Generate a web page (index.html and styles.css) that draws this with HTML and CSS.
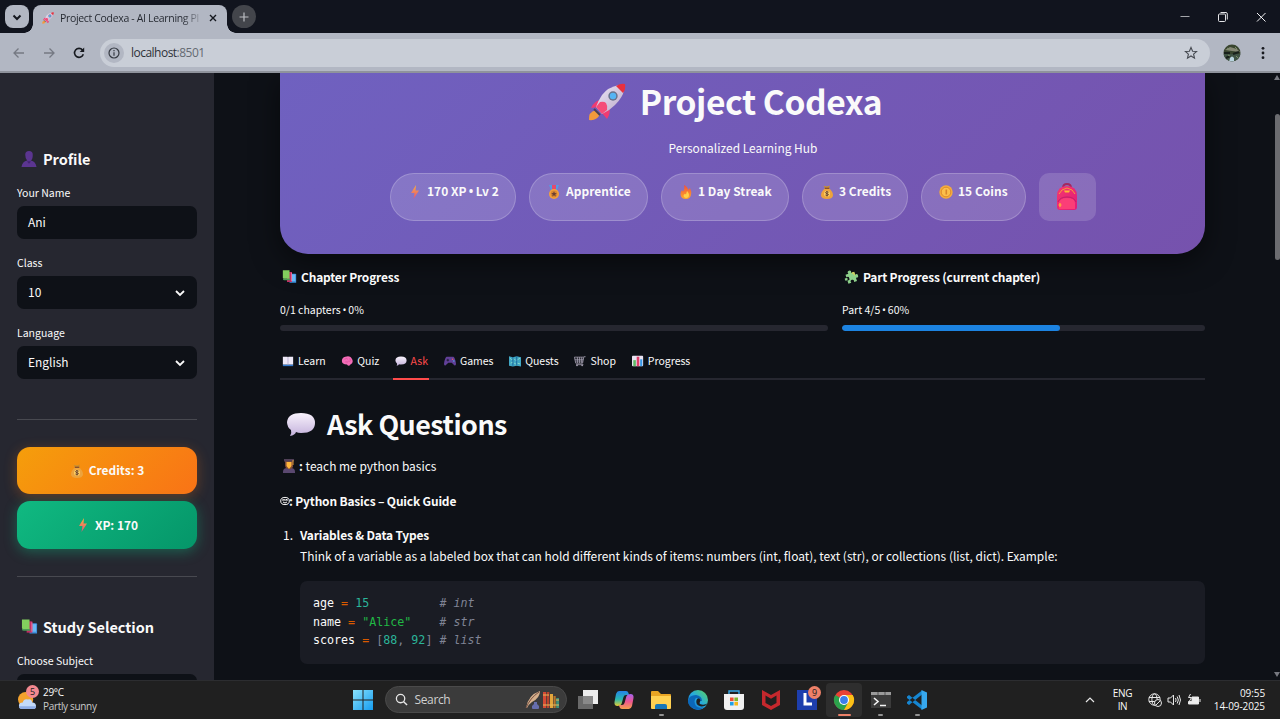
FILE: index.html
```html
<!DOCTYPE html>
<html lang="en">
<head>
<meta charset="utf-8">
<title>Project Codexa - AI Learning Platform</title>
<link rel="stylesheet" href="styles.css">
</head>
<body>
<svg class="defs" width="0" height="0" aria-hidden="true">
  <defs>
    <linearGradient id="g-bolt" x1="0" y1="0" x2="0" y2="1"><stop offset="0" stop-color="#ffb13b"/><stop offset="1" stop-color="#e0507c"/></linearGradient>
    <linearGradient id="g-fire" x1="0" y1="0" x2="0" y2="1"><stop offset="0" stop-color="#f0503c"/><stop offset="1" stop-color="#ffa82b"/></linearGradient>
    <linearGradient id="g-bag" x1="0" y1="0" x2="1" y2="1"><stop offset="0" stop-color="#f5386e"/><stop offset="1" stop-color="#e0197a"/></linearGradient>
    <linearGradient id="g-bubble" x1="0" y1="0" x2="0" y2="1"><stop offset="0" stop-color="#f8f2fc"/><stop offset="1" stop-color="#c4b2dc"/></linearGradient>
    <linearGradient id="g-body" x1="0" y1="0" x2="1" y2="1"><stop offset="0" stop-color="#eee6f6"/><stop offset="1" stop-color="#b9a9c8"/></linearGradient>
    <linearGradient id="g-win" x1="0" y1="0" x2="1" y2="1"><stop offset="0" stop-color="#8ae2fc"/><stop offset="1" stop-color="#159cf0"/></linearGradient>
    <linearGradient id="g-edge" x1="0" y1="1" x2="1" y2="0"><stop offset="0" stop-color="#0b63c4"/><stop offset=".5" stop-color="#25a9e0"/><stop offset="1" stop-color="#5bd65b"/></linearGradient>
    <linearGradient id="g-cop1" x1="0" y1="0" x2="0" y2="1"><stop offset="0" stop-color="#2583e8"/><stop offset=".55" stop-color="#29b8b0"/><stop offset="1" stop-color="#e5cc32"/></linearGradient>
    <linearGradient id="g-cop2" x1="0" y1="0" x2="0" y2="1"><stop offset="0" stop-color="#a463ee"/><stop offset=".5" stop-color="#ee5690"/><stop offset="1" stop-color="#f6a04c"/></linearGradient>
    <symbol id="rocket" viewBox="0 0 38 38">
      <path d="M8 27 Q0 29 1 37 Q9 38 12 31Z" fill="#f39a3c"/>
      <path d="M13 17 Q7 17 3 25 L10 24Z M21 25 Q23 30 19 36 L14 30Z" fill="#ef3b72"/>
      <path d="M31 2 Q20 4 14 12 Q10 18 8 24 L14 31 Q21 28 27 22 Q35 14 36 7Z" fill="url(#g-body)"/>
      <path d="M28 3 Q33 0 37 1 Q38 6 35 10Z" fill="#e8303e"/>
      <path d="M12 19 Q16 18 18 20 Q20 23 19 27 L14 31 L8 24Z" fill="#f54c78"/>
      <path d="M6 26 L12 32" stroke="#4a4058" stroke-width="2"/>
      <circle cx="25" cy="13" r="4.700" fill="#68718c"/><circle cx="25" cy="13" r="3.200" fill="#55b4f4"/>
    </symbol>
    <symbol id="bolt" viewBox="0 0 14 14"><path d="M8 0 L3 8 H6.500 L5.500 14 L11 5.500 H7.500Z" fill="url(#g-bolt)"/></symbol>
    <symbol id="medal" viewBox="0 0 14 14"><path d="M2 0h3l3 6-3 1z" fill="#4f9ce8"/><path d="M12 0H9L6 6l3 1z" fill="#4f9ce8"/><path d="M5 0h4v6H5z" fill="#e24b71"/><circle cx="7" cy="9" r="5" fill="#f5a13a"/><circle cx="7" cy="9" r="3.400" fill="#d98832"/><path d="M7 6.300l.8 1.800 2 .1-1.500 1.200.5 2L7 10.300l-1.800 1.100.5-2-1.500-1.200 2-.1z" fill="#6b3f32"/></symbol>
    <symbol id="fire" viewBox="0 0 14 14"><path d="M5 0 Q9 2 9 5 L11 3 Q13 7 12 10 Q11 14 7 14 Q2 14 1.500 9.500 Q1.300 7 3 5 L4 6.500 Q6 4 5 0Z" fill="url(#g-fire)"/><path d="M8 6 Q11 9 9.500 12 Q7 14 5 12 Q3.800 10 6 8.800 L7 9.500Z" fill="#ffd04a"/></symbol>
    <symbol id="money" viewBox="0 0 14 14"><path d="M5 3 L3.500.8 L7 1.500 L10 .5 L9 3Z" fill="#c98f2f"/><path d="M5 3H9Q13 7 13 10Q13 14 7 14Q1 14 1 10Q1 7 5 3Z" fill="#eda33c"/><path d="M4.800 3.300h4.500" stroke="#80482c" stroke-width="1.200"/><circle cx="7" cy="8.700" r="3" fill="#ffcf62"/><path d="M8.600 7.200Q5.500 6 5.500 7.600Q5.700 8.500 7 8.700Q8.800 9 8.300 10Q7.300 11 5.400 10M7 6v5.500" fill="none" stroke="#63402c" stroke-width=".9"/></symbol>
    <symbol id="coin" viewBox="0 0 14 14"><circle cx="7" cy="7" r="6.700" fill="#f6ad3c"/><circle cx="7" cy="7" r="4.800" fill="#fcbf4b" stroke="#d9872b" stroke-width=".9"/><path d="M6.500 4.500h1.600v5H6.500z" fill="#d9872b"/></symbol>
    <symbol id="bag" viewBox="0 0 24 28"><path d="M8 5Q8 1 12 1Q16 1 16 5" fill="none" stroke="#a5275e" stroke-width="2"/><path d="M2 13Q2 3 12 3Q22 3 22 13V24Q22 27 19 27H5Q2 27 2 24Z" fill="url(#g-bag)"/><path d="M4 11Q6 6 12 5Q18 6 20 11" stroke="#f79a3c" fill="none"/><path d="M9 7.500h6l-1 2h-4z" fill="#ffb636"/><path d="M4 26v-6Q5 15 12 15Q20 15 20 20v6Z" fill="#fb3e77"/><path d="M3 19Q5 14 12 14Q19 14 21 19" stroke="#c21e68" fill="none"/><path d="M5 20v4M3.500 22h3" stroke="#ffb636" stroke-width="1.200"/></symbol>
    <symbol id="books" viewBox="0 0 18 16"><path d="M9 4h7q1 0 1 1v10H9z" fill="#3d91df"/><path d="M10 5h6v8h-6z" fill="#6bb9f4"/><path d="M6 2h6v12H6z" fill="#c22d63"/><path d="M11 3h1v10h-1z" fill="#ea78a0"/><path d="M1 0h8v10H2q-1 0-1-1z" fill="#82cf5e"/><path d="M2 10h8v2H3q-2 0-2-2" fill="#4a9b55"/></symbol>
    <symbol id="puzzle" viewBox="0 0 14 14"><g transform="rotate(-18 7 7)"><path d="M2 3H5Q4 .3 6.500.3Q9 .3 8 3H11V6Q13.700 5 13.700 7.500Q13.700 10 11 9V12.500H8Q9 9.800 6.500 9.800Q4 9.800 5 12.500H2V9Q4.500 10 4.500 7.500Q4.500 5 2 6Z" fill="#8ed18b"/><path d="M8.500 3.500h2v3" stroke="#d0cf5f" stroke-width="1.500" fill="none"/><path d="M0 6.500q2-1 3 1q-1 2-3 1z" fill="#8ed18b"/></g></symbol>
    <symbol id="openbook" viewBox="0 0 14 12"><path d="M1 10h12v2H1z" fill="#3279cf"/><path d="M1 1h5.500L7 2l.5-1H13v9H1z" fill="#eee9f8"/><path d="M7 2v8" stroke="#b6acd0"/></symbol>
    <symbol id="brain" viewBox="0 0 14 12"><path d="M5 1Q11-1 13 4Q15 8 11 10Q9 13 7 10Q1 10 1 6Q1 2 5 1Z" fill="#f36cb7"/><path d="M4 4q3-2 4 0M5 7q3 1 4-1M10 3q2 2 0 4" fill="none" stroke="#d84896" stroke-width=".8"/></symbol>
    <symbol id="bubble" viewBox="0 0 30 26"><path d="M15 2Q29 2 29 12Q29 22 15 22Q12 22 10 21Q9 24 4 25Q6 22 5 19Q1 16 1 11Q2 2 15 2Z" fill="url(#g-bubble)"/></symbol>
    <symbol id="game" viewBox="0 0 14 12"><path d="M3 1h8q2 1 3 8q0 3-2 2L9 8H5l-3 3Q0 12 0 9Q1 2 3 1Z" fill="#614098"/><path d="M3 5h3M4.500 3.500v3" stroke="#1b1830"/><circle cx="10" cy="4" r=".8" fill="#f4565d"/><circle cx="11.500" cy="6" r=".8" fill="#4eb9ef"/></symbol>
    <symbol id="map" viewBox="0 0 14 13"><path d="M0 1l4.500 1L9 1l5 1v11l-5-1-4.500 1L0 12z" fill="#40a6c4"/><path d="M4.500 2v10M9 1v10" stroke="#165d94"/><path d="M1 3l2 2 1-1M6 4l2 2M10 5l3-2M2 9l2-1M6 9l2 1M10 9l3 1" fill="none" stroke="#8fdfca"/></symbol>
    <symbol id="cart" viewBox="0 0 14 12"><path d="M13.500 1h-2L10 8.500H2L.5 1.500H11M1 4h10M1.500 6h9M4 1.500v7M6.500 1.500v7M9 1.500v7M2.500 10.300H11" fill="none" stroke="#aaa5b7" stroke-width=".9"/><circle cx="3.500" cy="11" r="1" fill="#aaa5b7"/><circle cx="9.500" cy="11" r="1" fill="#aaa5b7"/></symbol>
    <symbol id="chart" viewBox="0 0 14 12"><rect x="0" y="0" width="13" height="12" rx="1" fill="#e9e2f1"/><path d="M1.500 5h3v7h-3z" fill="#5cba64"/><path d="M5.500 1h3v11h-3z" fill="#e03e69"/><path d="M9.500 4h2.500v8H9.500z" fill="#3699e8"/></symbol>
    <symbol id="person" viewBox="0 0 16 17"><path d="M4 4Q4 0 8 0Q12 0 12 4Q12 9 10 10Q15 11 16 17H0Q1 11 6 10Q4 8 4 4Z" fill="#5b3590"/><path d="M6 10Q8 12 10 10L9 13H7z" fill="#442373"/></symbol>
    <symbol id="student" viewBox="0 0 12 14"><path d="M0 13Q0 9 4 9H8Q12 9 12 13V14H0Z" fill="#5a4870"/><path d="M2 2h8v6Q8 11 6 10Q2 10 2 6z" fill="#7d4a37"/><path d="M3.500 3h5v4l-2.500 3-2.500-3z" fill="#ffb63b"/><path d="M1 0h10v2.500H1z" fill="#504057"/><path d="M10 1v5" stroke="#dd993b"/></symbol>
  </defs>
</svg>

<header class="browser">
  <div class="tabstrip">
    <button class="tab-search"><svg viewBox="0 0 24 24"><path d="M8.500 10.500l3.500 3.500 3.500-3.500" fill="none" stroke="#14171f" stroke-width="2"/></svg></button>
    <div class="tab">
      <svg class="tab-icon"><use href="#rocket"/></svg>
      <span class="tab-title">Project Codexa - AI Learning Pl</span>
      <svg class="tab-close" viewBox="0 0 8 8"><path d="M1 1l6 6M7 1L1 7" stroke="#15181f" stroke-width="1.400"/></svg>
    </div>
    <button class="new-tab"><svg viewBox="0 0 24 24"><path d="M12 7.500v9M7.500 12h9" stroke="#bdbfc4" stroke-width="1.200"/></svg></button>
    <div class="window-controls">
      <svg viewBox="0 0 12 12"><path d="M1.500 5.500h9" stroke="#a4a6ab"/></svg>
      <svg viewBox="0 0 12 12"><rect x="1.500" y="3" width="7" height="7.500" rx="1" fill="none" stroke="#e5e5e8"/><path d="M3.500 1.500H9Q10.300 1.500 10.300 3V8.500" fill="none" stroke="#e5e5e8"/></svg>
      <svg viewBox="0 0 12 12"><path d="M2 2l8.500 8.500M10.500 2L2 10.500" stroke="#f5f5f7"/></svg>
    </div>
  </div>
  <div class="toolbar">
    <svg class="nav" viewBox="0 0 14 14"><path d="M12 7H2M6.500 2.500L2 7l4.500 4.500" fill="none" stroke="#757983" stroke-width="1.300"/></svg>
    <svg class="nav" viewBox="0 0 14 14"><path d="M2 7h10M7.500 2.500L12 7l-4.500 4.500" fill="none" stroke="#757983" stroke-width="1.300"/></svg>
    <svg class="nav" viewBox="0 0 14 14"><path d="M11.300 8.300A4.500 4.500 0 1 1 10.500 4L11.500 5.200" fill="none" stroke="#16191f" stroke-width="1.600"/><path d="M12.200 1.500V6H7.700z" fill="#16191f"/></svg>
    <div class="omnibox">
      <span class="site-info"><svg viewBox="0 0 12 12"><circle cx="6" cy="6" r="5" fill="none" stroke="#343941" stroke-width="1.200"/><path d="M6 5.200v3.500M6 3v1.200" stroke="#343941" stroke-width="1.200"/></svg></span>
      <span class="url">localhost<span class="port">:8501</span></span>
      <svg class="star" viewBox="0 0 14 14"><path d="M7 1.500l1.600 3.700 4 .3-3 2.700.9 3.900L7 10l-3.500 2.100.9-3.900-3-2.700 4-.3z" fill="none" stroke="#454950" stroke-width="1.100"/></svg>
    </div>
    <svg class="avatar" viewBox="0 0 18 18"><clipPath id="av"><circle cx="9" cy="9" r="8.500"/></clipPath><g clip-path="url(#av)"><path d="M0 0h18v18H0z" fill="#39452f"/><path d="M0 10h18v8H0z" fill="#405345"/><path d="M2 6l5-3 7 2 3 3-8-1z" fill="#858775"/><path d="M1 9h6M10 10l6-2M3 14l4-2" stroke="#18201b" stroke-width="2"/><path d="M4 4l3 2M12 3l2 2M13 12l2 2M5 11l2 1" stroke="#7c906b"/><path d="M7 14q2-3 4 0v4H6z" fill="#b9d4df"/></g></svg>
    <svg class="kebab" viewBox="0 0 4 14"><circle cx="2" cy="2.300" r="1.400"/><circle cx="2" cy="7" r="1.400"/><circle cx="2" cy="11.700" r="1.400"/></svg>
  </div>
</header>

<div class="viewport">
  <aside class="sidebar">
    <h3 class="side-heading"><svg class="emoji-side"><use href="#person"/></svg><span>Profile</span></h3>
    <label class="field"><span class="label">Your Name</span><span class="input">Ani</span></label>
    <label class="field"><span class="label">Class</span><span class="input">10<svg class="chev" viewBox="0 0 10 7"><path d="M1 1l4 4 4-4"/></svg></span></label>
    <label class="field"><span class="label">Language</span><span class="input">English<svg class="chev" viewBox="0 0 10 7"><path d="M1 1l4 4 4-4"/></svg></span></label>
    <div class="rule rule-top"></div>
    <div class="stat credits"><svg><use href="#money"/></svg>Credits: 3</div>
    <div class="stat xp"><svg><use href="#bolt"/></svg>XP: 170</div>
    <div class="rule rule-bottom"></div>
    <h3 class="side-heading study"><svg class="emoji-side emoji-books"><use href="#books"/></svg><span>Study Selection</span></h3>
    <label class="field"><span class="label">Choose Subject</span><span class="input"></span></label>
  </aside>

  <main class="main">
    <section class="hero">
      <h1 class="hero-title"><svg><use href="#rocket"/></svg><span>Project Codexa</span></h1>
      <p class="hero-sub">Personalized Learning Hub</p>
      <div class="pills">
        <div class="pill p-xp"><svg><use href="#bolt"/></svg><span>170 XP <span class="bullet">•</span> Lv 2</span></div>
        <div class="pill p-rank"><svg><use href="#medal"/></svg>Apprentice</div>
        <div class="pill p-streak"><svg><use href="#fire"/></svg>1 Day Streak</div>
        <div class="pill p-credits"><svg><use href="#money"/></svg>3 Credits</div>
        <div class="pill p-coins"><svg><use href="#coin"/></svg>15 Coins</div>
        <div class="bag"><svg><use href="#bag"/></svg></div>
      </div>
    </section>

    <section class="progress-row">
      <div><h4 class="prog-title"><svg><use href="#books"/></svg>Chapter Progress</h4><p class="prog-label">0/1 chapters <span class="bullet">•</span> 0%</p><div class="bar"></div></div>
      <div><h4 class="prog-title"><svg><use href="#puzzle"/></svg>Part Progress (current chapter)</h4><p class="prog-label">Part 4/5 <span class="bullet">•</span> 60%</p><div class="bar"><div class="fill" style="width:60%"></div></div></div>
    </section>

    <nav class="tabs">
      <a class="t-learn"><svg><use href="#openbook"/></svg>Learn</a>
      <a class="t-quiz"><svg><use href="#brain"/></svg>Quiz</a>
      <a class="t-ask active"><svg><use href="#bubble"/></svg>Ask</a>
      <a class="t-games"><svg><use href="#game"/></svg>Games</a>
      <a class="t-quests"><svg><use href="#map"/></svg>Quests</a>
      <a class="t-shop"><svg><use href="#cart"/></svg>Shop</a>
      <a class="t-progress"><svg><use href="#chart"/></svg>Progress</a>
    </nav>

    <h2 class="ask-title"><svg><use href="#bubble"/></svg><span>Ask Questions</span></h2>
    <p class="line user"><svg><use href="#student"/></svg><b>:</b>&nbsp;<span>teach me python basics</span></p>
    <p class="line bot"><svg viewBox="0 0 12 10"><ellipse cx="5" cy="5" rx="4.300" ry="3.600"/><path d="M2 4h6M3 6q2 2 4 0M4 3v1M6.500 3v1"/></svg><b>: Python Basics – Quick Guide</b></p>
    <div class="item"><span class="num">1.</span><div><p class="item-title">Variables &amp; Data Types</p><p class="item-text">Think of a variable as a labeled box that can hold different kinds of items: numbers (int, float), text (str), or collections (list, dict). Example:</p></div></div>
    <pre class="code">age <i class="op">=</i> <i class="n">15</i>          <i class="c"># int</i>
name <i class="op">=</i> <i class="s">"Alice"</i>    <i class="c"># str</i>
scores <i class="op">=</i> <i class="p">[</i><i class="n">88</i><i class="p">,</i> <i class="n">92</i><i class="p">]</i> <i class="c"># list</i></pre>
  </main>
  <div class="scrollbar"><i class="up"></i><i class="thumb"></i><i class="down"></i></div>
</div>

<footer class="taskbar">
  <div class="weather">
    <div class="weather-icon"><svg viewBox="0 0 20 20"><circle cx="8" cy="9" r="8" fill="#f3a22d"/><path d="M5 19Q1 19 1 15.500Q1 12 5 12Q6 8 10.500 9Q14 8 15 12Q19 12 19 16Q19 19 15 19Z" fill="#c3dafa"/><path d="M5 19Q1 19 1 16h18q0 3-4 3z" fill="#8faee7"/></svg><span class="badge">5</span></div>
    <div class="weather-text"><span class="temp">29°C</span><span class="cond">Partly sunny</span></div>
  </div>
  <div class="apps">
    <div class="app"><svg viewBox="0 0 22 22"><path d="M1 1h9.500v9.500H1zM11.500 1H21v9.500h-9.500zM1 11.500h9.500V21H1zM11.500 11.500H21V21h-9.500z" fill="url(#g-win)"/></svg></div>
    <div class="search">
      <svg class="lens" viewBox="0 0 14 14"><circle cx="6" cy="6" r="4.500" fill="none" stroke="#e8e8e8" stroke-width="1.400"/><path d="M9.300 9.300L13 13" stroke="#e8e8e8" stroke-width="1.500"/></svg>
      <span>Search</span>
      <svg class="doodle" viewBox="0 0 34 20"><path d="M1 18Q3 5 15 1Q15 8 7 12Q4 14 2 18" fill="#d6b08b"/><path d="M1 18Q5 8 14 2" stroke="#765044" fill="none"/><path d="M9 12h3v2l2 2v2q0 1-1 1H8q-1 0-1-1v-2l2-2z" fill="#666eac"/><path d="M18 2h3v16h-3z" fill="#d54a34"/><path d="M21.700 2h2.600v16h-2.600z" fill="#b8442d"/><path d="M25 4h3v14h-3z" fill="#e3a63c"/><path d="M28.500 6h2.200v12h-2.200z" fill="#b7752c"/><path d="M31.200 8h2.800v10h-2.800z" fill="#3e8e79"/><path d="M18 5h6M18 15h16M31 10h3" stroke="#e9bb5b"/></svg>
    </div>
    <div class="app"><svg viewBox="0 0 22 22"><path d="M6 1h15v14H6z" fill="#ededed"/><path d="M1 7h15v13H1z" fill="#777" opacity=".85"/></svg></div>
    <div class="app"><svg viewBox="0 0 22 22"><path d="M6 2h7q2 0 2.500 2L16 6h-3q-2 0-2.500 2L8.500 15q-1 2-4 2Q1 17 1.500 13L3 5q1-3 3-3z" fill="url(#g-cop1)"/><path d="M16 20H9q-2 0-2.500-2L6 16h3q2 0 2.500-2L13.500 7q1-2 4-2Q21 5 20.500 9L19 17q-1 3-3 3z" fill="url(#g-cop2)"/></svg></div>
    <div class="app"><svg viewBox="0 0 22 22"><path d="M1 3q0-1 1-1h6l3 3h9q1 0 1 1v13H1z" fill="#e9a524"/><path d="M1 7h20v12q0 1-1 1H2q-1 0-1-1z" fill="#ffd152"/><path d="M5 20v-3q0-2 2-2h8q2 0 2 2v3z" fill="#1777b8"/></svg><i class="dot"></i></div>
    <div class="app"><svg viewBox="0 0 22 22"><circle cx="11" cy="11" r="10" fill="url(#g-edge)"/><path d="M1 12Q2 6 9 6Q15 7 15 12H11Q12 9 9 9Q6 12 9 17Q12 20 17 18Q12 23 6 19Q1 17 1 12Z" fill="#0b67b8"/><path d="M12 9.500q2 1 1 3.500q-1 1 0 2q4 2 8-1-3 4-7 3.500Q8 16 9.500 11q.5-2 2.500-1.500z" fill="#202020"/></svg></div>
    <div class="app"><svg viewBox="0 0 22 22"><path d="M6 6V2h10v4" fill="none" stroke="#35a6e5" stroke-width="1.400"/><path d="M1 5h20v13q0 3-3 3H4q-3 0-3-3z" fill="#f1f1f1"/><path d="M7 8.500h3.600v3.600H7z" fill="#ef5033"/><path d="M11.400 8.500H15v3.600h-3.600z" fill="#7cb82f"/><path d="M7 12.900h3.600v3.600H7z" fill="#20a1e6"/><path d="M11.400 12.900H15v3.600h-3.600z" fill="#f7b719"/></svg></div>
    <div class="app"><svg viewBox="0 0 22 22"><path d="M2 1l9 5 9-5v15l-9 5-9-5zM5.500 6.500v7.500l5.500 3 5.500-3V6.500L11 9.800z" fill="#c5282d" fill-rule="evenodd"/></svg></div>
    <div class="app"><svg viewBox="0 0 22 22"><path d="M1 1h20v20H1z" fill="#1d3ead"/><path d="M9 4v11h7" fill="none" stroke="#fff" stroke-width="3"/></svg><span class="badge badge-app">9</span></div>
    <div class="app current"><svg viewBox="0 0 22 22"><circle cx="11" cy="11" r="10" fill="#e94235"/><path d="M11 11L2.300 6A10 10 0 0 0 11 21L15.500 13.500z" fill="#2ba24c"/><path d="M11 11V6h8.700A10 10 0 0 1 11 21l4.300-7.500z" fill="#fbc116"/><circle cx="11" cy="11" r="5" fill="#fff"/><circle cx="11" cy="11" r="3.900" fill="#3c7eea"/></svg><i class="dot wide"></i></div>
    <div class="app"><svg viewBox="0 0 22 22"><path d="M1 3h20v16H1z" fill="#3b3b3b"/><path d="M1 3h20v3H1z" fill="#9a9a9a"/><path d="M8 3v3M15 3v3" stroke="#555"/><path d="M4 9l4 3.500L4 16M10 16.500h6" fill="none" stroke="#f4f4f4" stroke-width="1.600"/></svg><i class="dot"></i></div>
    <div class="app"><svg viewBox="0 0 22 22"><path d="M1 7.500l2-1.500L16 16.500v4L1 9zM1 14.500l2 1.500L16 5.500v-4L1 13z" fill="#1686d1"/><path d="M15.500 1L21 3.500v15L15.500 21z" fill="#37a8ee"/></svg><i class="dot"></i></div>
  </div>
  <div class="tray">
    <svg class="caret" viewBox="0 0 10 6"><path d="M1 5l4-4 4 4" fill="none" stroke="#e8e8e8" stroke-width="1.200"/></svg>
    <div class="lang"><span>ENG</span><span>IN</span></div>
    <svg class="tray-icon" viewBox="0 0 14 14"><circle cx="6.500" cy="6.500" r="5.700"/><ellipse cx="6.500" cy="6.500" rx="2.600" ry="5.700"/><path d="M1 4.500h11M1 8.500h7"/><circle cx="10" cy="10" r="3.500" fill="#202020"/><path d="M7.700 12.300l4.600-4.600"/></svg>
    <svg class="tray-icon" viewBox="0 0 14 14"><path d="M1 5h2.500L6.500 2v10l-3-3H1zM8.500 5q1.200 2 0 4M10.200 3.500q2.300 3.500 0 7M12 2q3 5 0 10"/></svg>
    <svg class="tray-icon battery" viewBox="0 0 14 14"><path d="M5 4h6.500v7H1.500V8.500H5z" fill="#eee"/><path d="M13 6v3M3.500 1L1.500 4.500h3L2.500 8"/></svg>
    <div class="clock"><span>09:55</span><span>14-09-2025</span></div>
  </div>
</footer>
</body>
</html>
```
FILE: styles.css
```css
* { box-sizing: border-box; }
body { margin: 0; width: 1280px; height: 719px; overflow: hidden; display: flex; flex-direction: column; background: #0e1117; color: #fafafa; font-family: "Noto Sans CJK SC", "Noto Sans", sans-serif; font-size: 11.94px; }
h1, h2, h3, h4, p, pre { margin: 0; }
svg { display: block; flex: none; }
.defs { position: absolute; }
button { border: 0; padding: 0; }

/* browser frame */
.browser { height: 73px; flex: none; font-family: "Open Sans", sans-serif; }
.tabstrip { height: 33px; background: #11141e; display: flex; align-items: center; padding-left: 5px; }
.tab-search { width: 24px; height: 23px; border-radius: 8px; background: #b2b7c3; display: grid; place-items: center; }
.tab-search svg, .new-tab svg { width: 24px; height: 24px; }
.tab { align-self: flex-end; position: relative; width: 194px; height: 28px; margin-left: 4px; background: #b2b7c3; border-radius: 8px 8px 0 0; display: flex; align-items: center; padding: 0 10px 3px 9px; }
.tab::before, .tab::after { content: ""; position: absolute; bottom: 0; width: 9px; height: 9px; }
.tab::before { left: -9px; background: radial-gradient(circle at 0 0, transparent 8.5px, #b2b7c3 9px); }
.tab::after { right: -9px; background: radial-gradient(circle at 100% 0, transparent 8.5px, #b2b7c3 9px); }
.tab-icon { width: 12px; height: 12px; }
.tab-title { margin-left: 6px; width: 142px; white-space: nowrap; font-size: 10.5px; letter-spacing: -.33px; color: transparent; background: linear-gradient(90deg, #23272f 122px, #b2b7c3 144px); background-clip: text; }
.tab-close { width: 8px; height: 8px; margin-left: auto; }
.new-tab { width: 24px; height: 23px; margin-left: 5px; border-radius: 12px; background: #43454b; display: grid; place-items: center; }
.window-controls { margin-left: auto; display: flex; gap: 26px; padding-right: 13px; }
.window-controls svg { width: 12px; height: 12px; }
.toolbar { height: 40px; background: #b2b7c3; border-bottom: 2px solid #8f939c; display: flex; align-items: center; padding: 1px 0 0 12px; }
.nav { width: 14px; height: 14px; margin-right: 16px; }
.omnibox { width: 1110px; height: 28px; margin-left: -2px; border-radius: 14px; background: #c9ced7; display: flex; align-items: center; padding: 0 12px 0 4px; }
.site-info { width: 20px; height: 20px; border-radius: 50%; background: #b2b7c3; display: grid; place-items: center; }
.site-info svg { width: 12px; height: 12px; }
.url { margin-left: 7px; font-size: 12px; letter-spacing: -.52px; color: #2e3239; }
.port { color: #656a72; }
.star { width: 14px; height: 14px; margin-left: auto; }
.avatar { width: 18px; height: 18px; margin-left: 13px; }
.kebab { width: 4px; height: 14px; margin-left: 20px; fill: #17191e; }

/* streamlit page */
.viewport { height: 607px; flex: none; display: flex; overflow: hidden; }
.sidebar { width: 214px; flex: none; padding: 76px 17px 0 17px; background: #262730; }
.side-heading { height: 20px; margin-bottom: 14px; display: flex; align-items: center; gap: 6px; padding-left: 4px; font-size: 14.500px; line-height: 20px; letter-spacing: -.05px; white-space: nowrap; }
.emoji-side { width: 16px; height: 16px; }
.emoji-books { width: 17px; margin-right: -1px; }
.field { display: block; margin-bottom: 14px; }
.label { display: block; height: 20px; margin-bottom: 3px; line-height: 20px; font-size: 10.500px; }
.input { display: flex; align-items: center; justify-content: space-between; height: 33px; padding: 0 12px 2px 11px; border-radius: 7px; background: #0e1117; }
.chev { width: 10px; height: 7px; margin-top: 3px; fill: none; stroke: #fafafa; stroke-width: 1.800; }
.rule { height: 1px; background: #484950; }
.rule-top { margin-top: 40px; }
.rule-bottom { margin-top: 27px; }
.stat { height: 47px; padding-bottom: 2px; display: flex; align-items: center; justify-content: center; gap: 5px; border-radius: 13px; font-weight: 700; }
.stat svg { width: 14px; height: 14px; margin-top: 2px; }
.credits { margin-top: 27px; background: linear-gradient(135deg, #f59e0b, #f97316); box-shadow: 0 3px 13px rgba(249, 115, 22, .3); }
.xp { height: 48px; margin-top: 7px; background: linear-gradient(135deg, #10b981, #059669); box-shadow: 0 3px 13px rgba(16, 185, 129, .4); }
.study { margin-top: 40px; }

.main { width: 925px; flex: none; margin-left: 66px; }
.hero { height: 181px; padding-top: 6px; text-align: center; border-radius: 0 0 28px 28px; background: linear-gradient(135deg, #6f61c0, #7652ad); box-shadow: 0 8px 28px rgba(0, 0, 0, .5); }
.hero-title { height: 46px; display: flex; align-items: center; justify-content: center; gap: 14px; padding-right: 15px; font-size: 33.600px; line-height: 46px; letter-spacing: -.42px; }
.hero-title svg { width: 38px; height: 38px; }
.hero-title span { margin-top: -3px; }
.hero-sub { height: 20px; margin-top: 13px; padding-left: 1px; line-height: 20px; }
.pills { margin-top: 15px; display: flex; gap: 13px; padding-left: 110px; }
.pill { height: 48px; padding: 8px 0 0 17px; display: flex; align-items: flex-start; gap: 5px; line-height: 17px; border: 1px solid rgba(255, 255, 255, .2); border-radius: 24px; background: rgba(255, 255, 255, .15); font-weight: 700; letter-spacing: .05px; white-space: nowrap; }
.pill svg { width: 14px; height: 14px; margin-top: 3px; }
.bullet { font-family: "Open Sans", sans-serif; margin: 0 -.5px; }
.p-xp { width: 126px; }
.p-rank { width: 119px; }
.p-streak { width: 128px; }
.p-credits { width: 106px; }
.p-coins { width: 105px; }
.bag { width: 57px; height: 48px; border-radius: 10px; background: rgba(255, 255, 255, .15); display: grid; place-items: center; }
.bag svg { width: 24px; height: 28px; margin-right: 1px; }

.progress-row { display: grid; grid-template-columns: 548px 363px; gap: 14px; padding-top: 13px; }
.prog-title { height: 20px; padding-left: 2px; display: flex; align-items: center; gap: 4px; line-height: 20px; font-size: 11.94px; letter-spacing: -.17px; }
.prog-title svg { width: 15px; height: 14px; }
.prog-label { height: 20px; margin: 13px 0 5px; line-height: 20px; font-size: 10.500px; }
.bar { height: 6px; border-radius: 3px; background: #262730; overflow: hidden; }
.fill { height: 6px; border-radius: 3px; background: #1c83e1; }

.tabs { height: 33px; margin-top: 16px; display: flex; gap: 13.300px; border-bottom: 2px solid #262730; }
.tabs a { height: 33px; padding: 0 0 6px 2px; display: flex; align-items: center; gap: 4px; font-size: 10.500px; line-height: 20px; white-space: nowrap; }
.tabs svg { width: 12px; height: 12px; margin-top: 1px; }
.t-learn { width: 46px; }
.t-quiz { width: 40px; }
.t-ask { width: 36px; }
.t-games, .t-quests { width: 52px; }
.t-shop { width: 44px; }
.t-progress { width: 61px; }
.tabs .active { color: #ff4b4b; border-bottom: 2px solid #ff4b4b; padding-bottom: 4px; }

.ask-title { height: 40px; margin-top: 24px; padding-left: 6px; display: flex; align-items: center; gap: 11px; font-size: 26.900px; line-height: 40px; letter-spacing: -.5px; }
.ask-title svg { width: 30px; height: 26px; }
.line { height: 21px; display: flex; align-items: center; line-height: 21px; }
.user { margin-top: 11px; padding-left: 3px; }
.user svg { width: 12px; height: 14px; margin-right: 4px; }
.bot { margin-top: 14px; letter-spacing: -.16px; }
.bot svg { width: 12px; height: 10px; margin-right: -3px; fill: none; stroke: #fafafa; }
.item { display: flex; margin-top: 13px; line-height: 21px; }
.num { width: 20px; padding-left: 3px; }
.item-title { font-weight: 700; letter-spacing: -.17px; }
.item-text { white-space: nowrap; }
.code { height: 83px; margin: 15px 0 0 20px; padding: 13px; border-radius: 7px; background: #1a1c24; font-family: "DejaVu Sans Mono", monospace; font-size: 11.670px; line-height: 18.600px; }
.code i { font-style: normal; }
.code .op { color: #d95a00; }
.code .n { color: #2bb59a; }
.code .s { color: #21b845; }
.code .p { color: #808495; }
.code .c { color: #808495; font-style: italic; }

.scrollbar { width: 6px; margin-left: auto; display: flex; flex-direction: column; align-items: center; }
.up, .down { border: 3px solid transparent; }
.up { border-bottom: 5px solid #777980; margin-top: -1px; }
.thumb { width: 5px; height: 146px; margin-top: 34px; border-radius: 3px; background: #6b6c70; }
.down { border-top: 5px solid #777980; margin-top: auto; }

/* taskbar */
.taskbar { height: 39px; flex: none; display: flex; background: #202020; border-top: 1px solid #2c2d30; font-family: "Open Sans", sans-serif; font-size: 10px; }
.weather { width: 345px; padding: 5px 0 0 18px; display: flex; gap: 5px; }
.weather-icon { position: relative; width: 20px; height: 20px; padding-top: 5px; }
.weather-icon svg { width: 19px; height: 19px; }
.badge { position: absolute; left: 8px; top: -1px; width: 13px; height: 13px; border-radius: 50%; background: #f3888f; color: #201b1c; font-size: 9px; line-height: 13px; text-align: center; }
.weather-text span { display: block; height: 13.500px; line-height: 13px; letter-spacing: -.33px; }
.cond { color: #c9c9c9; }
.apps { display: flex; }
.app { position: relative; width: 36.600px; height: 38px; display: grid; place-items: center; }
.app svg { width: 22px; height: 22px; }
.search { width: 182px; height: 27px; margin: 5px 3px 0; padding: 0 7px 0 9px; border-radius: 14px; border: 1px solid #4a4a4a; background: #3b3b3b; display: flex; align-items: center; font-size: 12px; color: #d0d0d0; letter-spacing: -.4px; }
.lens { width: 13px; height: 13px; margin-right: 7px; }
.doodle { width: 34px; height: 20px; margin-left: auto; }
.dot { position: absolute; left: 16px; bottom: 3px; width: 5px; height: 2px; border-radius: 1px; background: #929292; }
.wide { left: 12px; width: 13px; background: #ec8169; }
.current { background: #2e2e2e; border-radius: 4px; height: 34px; margin-top: 2px; }
.current .dot { bottom: 1px; }
.badge-app { left: 19px; top: 5px; background: #ee8169; }
.tray { margin-left: auto; display: flex; align-items: center; padding-right: 15px; }
.caret { width: 10px; height: 6px; margin-right: 17px; }
.lang, .clock { display: flex; flex-direction: column; line-height: 13px; }
.lang { width: 22px; text-align: center; margin-right: 14px; letter-spacing: -.3px; }
.tray-icon { width: 14px; height: 14px; margin-right: 5.500px; fill: none; stroke: #e8e8e8; }
.clock { width: 59px; margin-left: 0; text-align: right; white-space: nowrap; letter-spacing: -.1px; }
```
